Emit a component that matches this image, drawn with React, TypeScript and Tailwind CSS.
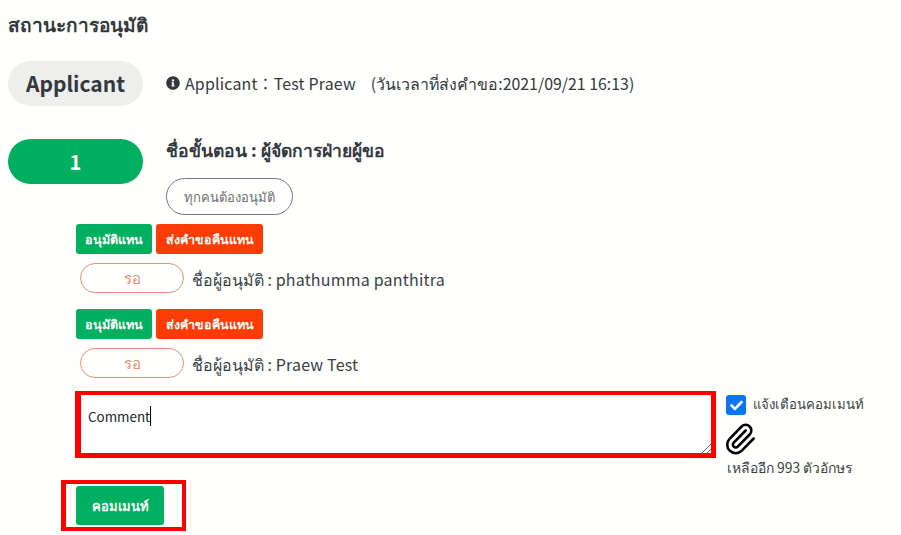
import React from 'react';
import { FaInfoCircle, FaCheck } from 'react-icons/fa';
import { Paperclip } from 'lucide-react';

const font = 'font-["Noto_Sans_CJK_JP","Noto_Sans",sans-serif]';

const Approver: React.FC<{ name: string }> = ({ name }) => (
  <div>
    <div className="flex gap-[4px] pl-[76px]">
      <button className="h-[30px] w-[76px] rounded-[3px] bg-[#00b060] text-[12.5px] font-bold text-white">อนุมัติแทน</button>
      <button className="h-[30px] w-[107px] rounded-[3px] bg-[#ff3c06] text-[12.5px] font-bold text-white">ส่งคำขอคืนแทน</button>
    </div>
    <div className="mt-[9px] flex items-center pl-[80px]">
      <span className="flex h-[30px] w-[104px] items-center justify-center rounded-full border border-[#ea9078] text-[15px] font-medium text-[#ec8a72]">รอ</span>
      <span className="ml-[8px] translate-y-[1px] text-[16px] text-[#3a3f45]">ชื่อผู้อนุมัติ : <span className="tracking-[0.2px]">{name}</span></span>
    </div>
  </div>
);

const App: React.FC = () => {
  return (
    <div className={`h-[535px] w-[901px] overflow-hidden bg-[#fffffd] text-[#33383e] ${font}`}>
      {/* Title */}
      <h2 className="pl-[8px] pt-[11px] text-[19px] leading-[26px] font-bold">สถานะการอนุมัติ</h2>

      {/* Applicant row */}
      <div className="mt-[24px] flex items-center pl-[8px]">
        <div className="flex h-[45px] w-[135px] items-center justify-center rounded-full bg-[#eeeeec] text-[21px] font-bold">Applicant</div>
        <div className="ml-[23px] flex items-center text-[15.9px]">
          <FaInfoCircle className="mr-[5px] text-[14px]" />
          <span className="tracking-[0.2px]">Applicant：Test Praew</span>
          <span className="ml-[15px]">(วันเวลาที่ส่งคำขอ:2021/09/21 16:13)</span>
        </div>
      </div>

      {/* Step 1 */}
      <div className="mt-[33px] flex pl-[8px]">
        <div className="flex h-[45px] w-[135px] items-center justify-center rounded-full bg-[#00b060] text-[20px] font-bold text-white">1</div>
        <div className="ml-[23px]">
          <div className="-translate-y-[1px] text-[17.5px] leading-[24px] font-bold">ชื่อขั้นตอน : ผู้จัดการฝ่ายผู้ขอ</div>
          <div className="mt-[15px] flex h-[37px] w-[127px] items-center justify-center rounded-full border border-[#77777a] text-[13px] text-[#6d7075]">ทุกคนต้องอนุมัติ</div>
        </div>
      </div>

      <div className="mt-[9px] flex flex-col gap-[16px]">
        <Approver name="phathumma panthitra" />
        <Approver name="Praew Test" />
      </div>

      {/* Comment box */}
      <div className="mt-[13px] flex items-start pl-[75px]">
        <div className="relative h-[67px] w-[641px] border-t-[4px] border-r-[5px] border-b-[5px] border-l-[6px] border-[#ff0000] bg-white pl-[7px] pt-[7px] text-[13.4px] leading-[24px] text-[#22262a]">
          Comment<span className="inline-block h-[20px] w-px translate-y-[4px] bg-black" />
          <svg className="absolute right-0 bottom-0" width="10" height="10" viewBox="0 0 10 10">
            <path d="M1 10 10 1M6 10l4-4" stroke="#666" strokeWidth="1" fill="none" />
          </svg>
        </div>
        <div className="ml-[10px]">
          <div className="mt-[4px] flex items-center">
            <span className="flex h-[20px] w-[20px] items-center justify-center rounded-[3px] bg-[#0b76f5] text-[13px] text-white"><FaCheck /></span>
            <span className="ml-[7px] -translate-y-[1px] text-[13.2px] text-[#3a3f45]">แจ้งเตือนคอมเมนท์</span>
          </div>
          <Paperclip className="mt-[7px] -ml-[3px] h-[34px] w-[34px] text-black" strokeWidth={1.8} />
          <div className="mt-[1px] ml-[1px] text-[13.9px] text-[#3a3f45]">เหลืออีก 993 ตัวอักษร</div>
        </div>
      </div>

      {/* Submit */}
      <div className="ml-[61px] mt-[2px] flex h-[51px] w-[125px] items-center border-[4px] border-l-[5px] border-[#ff0000] pl-[10px]">
        <button className="h-[39px] w-[88px] rounded-[3px] bg-[#00b060] text-[13px] font-bold text-white">คอมเมนท์</button>
      </div>
    </div>
  );
};

export default App;
